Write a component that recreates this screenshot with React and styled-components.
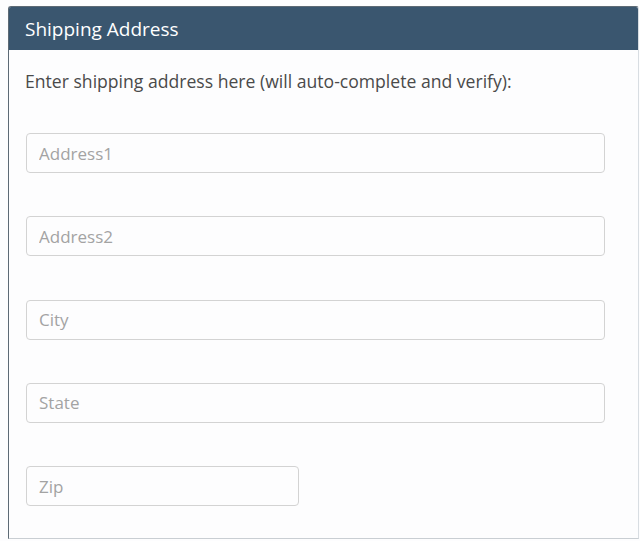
import React from "react";
import styled, { createGlobalStyle } from "styled-components";

const GlobalStyle = createGlobalStyle`
  html, body {
    margin: 0;
    padding: 0;
    background: #fdfdfe;
  }
  body {
    font-family: "Open Sans", "Liberation Sans", sans-serif;
  }
`;

const fields = [
  { name: "address1", placeholder: "Address1" },
  { name: "address2", placeholder: "Address2" },
  { name: "city", placeholder: "City" },
  { name: "state", placeholder: "State" },
  { name: "zip", placeholder: "Zip", short: true },
];

export default function App() {
  return (
    <>
      <GlobalStyle />
      <Page>
        <Panel>
          <PanelHeader>Shipping Address</PanelHeader>
          <PanelBody>
            <Intro>Enter shipping address here (will auto-complete and verify):</Intro>
            <Form>
              {fields.map((f) => (
                <Field key={f.name} name={f.name} placeholder={f.placeholder} $short={f.short} />
              ))}
            </Form>
          </PanelBody>
        </Panel>
      </Page>
    </>
  );
}

const Page = styled.div`
  padding: 6px 1px 0 8px;
  height: 541px;
  box-sizing: border-box;
`;

const Panel = styled.section`
  height: 533px;
  border: 1px solid #5d6a75;
  border-right-color: #d8dde2;
  border-bottom-color: #c9ced3;
  border-radius: 3px 3px 0 0;
  background: #fdfdfe;
  overflow: hidden;
  box-sizing: border-box;
`;

const PanelHeader = styled.h2`
  margin: 0;
  height: 43px;
  padding: 0 16px;
  display: flex;
  align-items: center;
  background: #3a566f;
  color: #fff;
  font-size: 19px;
  font-weight: 400;
`;

const PanelBody = styled.div`
  padding: 19px 33px 0 16px;
`;

const Intro = styled.p`
  margin: 0 0 40px;
  font-size: 17.6px;
  line-height: 24px;
  color: #4a4a4a;
`;

const Form = styled.div`
  display: flex;
  flex-direction: column;
  gap: 43.3px;
  align-items: flex-start;
`;

const Field = styled.input`
  width: ${(p) => (p.$short ? "273px" : "579px")};
  height: 40px;
  margin-left: 1px;
  padding: 0 12px;
  box-sizing: border-box;
  border: 1px solid #d3d3d3;
  border-radius: 4px;
  background: #fdfdfe;
  font-family: inherit;
  font-size: 17px;
  color: #555;
  outline: none;
  &::placeholder {
    color: #a3a3a3;
  }
`;
